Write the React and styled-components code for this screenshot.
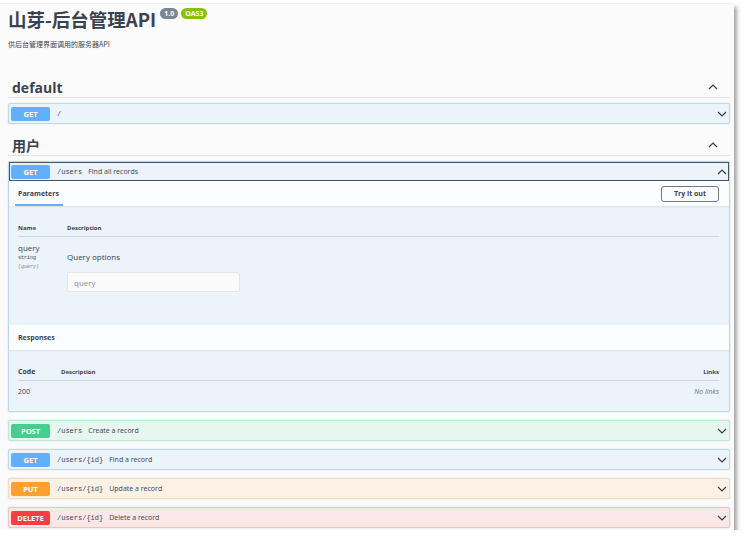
import React from "react";
import styled, { createGlobalStyle } from "styled-components";

const GlobalStyle = createGlobalStyle`
  body {
    margin: 0;
    background: #fff;
    font-family: "Open Sans", "Noto Sans CJK SC", sans-serif;
    color: #3b4151;
  }
`;

const methods = {
  get: { badge: "#61affe", bg: "#ebf3fb", border: "#bcd9f3" },
  post: { badge: "#49cc90", bg: "#e7f6ef", border: "#bde8d3" },
  put: { badge: "#fca130", bg: "#fbf1e5", border: "#f4dbbb" },
  delete: { badge: "#f93e3e", bg: "#fae8e8", border: "#efc2c4" },
};

const Chevron = ({ up, size = 10 }) => (
  <svg width={size} height={size * 0.6} viewBox="0 0 10 6">
    <polyline
      points={up ? "1,5 5,1 9,5" : "1,1 5,5 9,1"}
      fill="none"
      stroke="#3b4151"
      strokeWidth="1.2"
    />
  </svg>
);

const Op = ({ method, path, summary, open }) => {
  const m = methods[method];
  return (
    <Block $bg={m.bg} $border={m.border}>
      <Summary $open={open}>
        <Method $color={m.badge}>{method.toUpperCase()}</Method>
        <Path>{path}</Path>
        <SummaryText>{summary}</SummaryText>
        <Spacer />
        <Chevron up={open} />
      </Summary>
      {open && (
        <>
          <SectionHeader>
            <Tab>Parameters</Tab>
            <TryButton>Try it out</TryButton>
          </SectionHeader>
          <ParamArea>
            <HeadRow>
              <NameCol>Name</NameCol>
              <span>Description</span>
            </HeadRow>
            <ParamRow>
              <NameCol>
                <ParamName>query</ParamName>
                <ParamType>string</ParamType>
                <ParamIn>(query)</ParamIn>
              </NameCol>
              <ParamDesc>
                <span>Query options</span>
                <Input placeholder="query" />
              </ParamDesc>
            </ParamRow>
          </ParamArea>
          <SectionHeader>
            <RespTitle>Responses</RespTitle>
          </SectionHeader>
          <RespArea>
            <RespHead>
              <CodeCol>Code</CodeCol>
              <span>Description</span>
              <Spacer />
              <span>Links</span>
            </RespHead>
            <RespRow>
              <CodeCol>200</CodeCol>
              <Spacer />
              <NoLinks>No links</NoLinks>
            </RespRow>
          </RespArea>
        </>
      )}
    </Block>
  );
};

const App = () => (
  <>
    <GlobalStyle />
    <Page>
      <TitleRow>
        <Title>山芽-后台管理API</Title>
        <Badges>
          <Badge $color="#7d8492">1.0</Badge>
          <Badge $color="#89bf04">OAS3</Badge>
        </Badges>
      </TitleRow>
      <Desc>供后台管理界面调用的服务器API</Desc>

      <Tag $top={28}>
        <TagHeader>
          <span>default</span>
          <Chevron up />
        </TagHeader>
        <OpList>
          <Op method="get" path="/" summary="" />
        </OpList>
      </Tag>

      <Tag $top={11}>
        <TagHeader>
          <span>用户</span>
          <Chevron up />
        </TagHeader>
        <OpList>
          <Op method="get" path="/users" summary="Find all records" open />
          <Op method="post" path="/users" summary="Create a record" />
          <Op method="get" path="/users/{id}" summary="Find a record" />
          <Op method="put" path="/users/{id}" summary="Update a record" />
          <Op method="delete" path="/users/{id}" summary="Delete a record" />
        </OpList>
      </Tag>
    </Page>
  </>
);

export default App;

const Page = styled.div`
  box-sizing: border-box;
  width: 734px;
  height: 526px;
  margin-top: 4px;
  padding: 3px 4px 0 8px;
  background: #fbfbfb;
  box-shadow: 3px 3px 4px rgba(0, 0, 0, 0.35), 0 -1px 1px rgba(0, 0, 0, 0.06);
`;

const TitleRow = styled.div`
  display: flex;
  align-items: flex-start;
  gap: 4px;
`;

const Title = styled.h2`
  margin: 0;
  font-size: 18.5px;
  line-height: 24px;
  font-weight: 700;
  font-family: "Noto Sans CJK SC", "Open Sans", sans-serif;
`;

const Badges = styled.div`
  display: flex;
  gap: 3px;
  margin-top: 1px;
`;

const Badge = styled.span`
  height: 11px;
  padding: 0 4px;
  border-radius: 6px;
  background: ${(p) => p.$color};
  color: #fff;
  font-size: 7px;
  line-height: 11px;
  font-weight: 700;
`;

const Desc = styled.p`
  margin: 8px 0 0;
  font-size: 7px;
  line-height: 10px;
  font-family: "Noto Sans CJK SC", sans-serif;
`;

const Tag = styled.section`
  margin-top: ${(p) => p.$top}px;
`;

const TagHeader = styled.div`
  display: flex;
  align-items: center;
  justify-content: space-between;
  height: 20px;
  padding: 0 12px 0 4px;
  border-bottom: 1px solid rgba(59, 65, 81, 0.12);
  font-size: 14px;
  font-weight: 700;
  font-family: "Open Sans", "Noto Sans CJK SC", sans-serif;
`;

const OpList = styled.div`
  display: flex;
  flex-direction: column;
  gap: 8px;
  margin-top: 5px;
`;

const Block = styled.div`
  background: ${(p) => p.$bg};
  border: 1px solid ${(p) => p.$border};
  border-radius: 2px;
  box-shadow: 0 0 2px rgba(0, 0, 0, 0.12);
`;

const Summary = styled.div`
  display: flex;
  align-items: center;
  height: 19px;
  padding: 0 2px;
  box-shadow: ${(p) => (p.$open ? "inset 0 0 0 1px #4b5161" : "none")};
`;

const Method = styled.span`
  width: 39px;
  height: 14px;
  border-radius: 2px;
  background: ${(p) => p.$color};
  color: #fff;
  font-size: 7.5px;
  font-weight: 700;
  line-height: 14px;
  text-align: center;
`;

const Path = styled.span`
  margin-left: 7px;
  font-family: "Liberation Mono", "DejaVu Sans Mono", monospace;
  font-size: 7px;
  color: #3b4151;
`;

const SummaryText = styled.span`
  margin-left: 6px;
  font-size: 7px;
`;

const Spacer = styled.span`
  flex: 1;
`;

const SectionHeader = styled.div`
  display: flex;
  align-items: center;
  justify-content: space-between;
  height: 25px;
  padding: 0 10px 0 6px;
  background: #fcfdfe;
  box-shadow: 0 1px 2px rgba(0, 0, 0, 0.08);
`;

const Tab = styled.span`
  align-self: stretch;
  display: flex;
  align-items: center;
  padding: 0 4px 0 3px;
  margin-top: 2px;
  font-size: 7px;
  font-weight: 700;
  border-bottom: 2px solid #61affe;
`;

const TryButton = styled.button`
  width: 58px;
  height: 16px;
  padding: 0;
  border: 1px solid #737986;
  border-radius: 3px;
  background: transparent;
  color: #3b4151;
  font-family: "Open Sans", sans-serif;
  font-size: 7px;
  font-weight: 700;
`;

const ParamArea = styled.div`
  height: 119px;
  padding: 14px 10px 0 9px;
  box-sizing: border-box;
`;

const HeadRow = styled.div`
  display: flex;
  align-items: center;
  height: 16px;
  border-bottom: 1px solid rgba(59, 65, 81, 0.15);
  font-size: 6px;
  font-weight: 700;
`;

const NameCol = styled.div`
  width: 49px;
  display: flex;
  flex-direction: column;
`;

const ParamRow = styled.div`
  display: flex;
  padding-top: 5px;
`;

const ParamName = styled.span`
  font-size: 8px;
  line-height: 11px;
`;

const ParamType = styled.span`
  font-family: "Liberation Mono", monospace;
  font-size: 5px;
  line-height: 9px;
  margin-top: 1px;
`;

const ParamIn = styled.span`
  font-family: "Liberation Mono", monospace;
  font-size: 5px;
  line-height: 9px;
  font-style: italic;
  color: #808080;
`;

const ParamDesc = styled.div`
  display: flex;
  flex-direction: column;
  gap: 10px;
  padding-top: 10px;
  font-size: 8px;
  line-height: 10px;
`;

const Input = styled.input`
  box-sizing: border-box;
  width: 173px;
  height: 20px;
  padding: 0 6px;
  border: 1px solid #e4e7ea;
  border-radius: 2px;
  background: #fafafa;
  font-family: "Open Sans", sans-serif;
  font-size: 8px;
  color: #3b4151;
  &::placeholder {
    color: #8a8f99;
  }
`;

const RespTitle = styled.span`
  padding-left: 3px;
  font-size: 7px;
  font-weight: 700;
`;

const RespArea = styled.div`
  height: 61px;
  padding: 13px 10px 0 9px;
  box-sizing: border-box;
`;

const RespHead = styled.div`
  display: flex;
  align-items: center;
  height: 17px;
  border-bottom: 1px solid rgba(59, 65, 81, 0.15);
  font-size: 6px;
  font-weight: 700;

  & > span:first-child {
    font-size: 7px;
  }
`;

const CodeCol = styled.span`
  width: 43px;
  font-size: 7px;
`;

const RespRow = styled.div`
  display: flex;
  align-items: center;
  height: 21px;
  font-size: 7px;
`;

const NoLinks = styled.span`
  font-style: italic;
  color: #6b717d;
`;
